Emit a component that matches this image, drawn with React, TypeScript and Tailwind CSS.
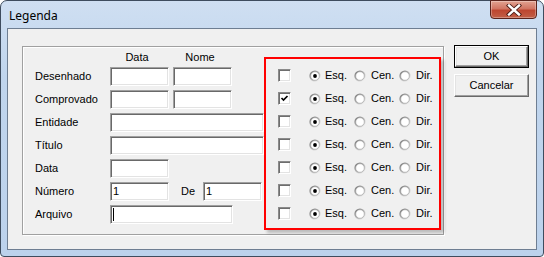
import React from "react";

const rows = [false, true, false, false, false, false, false];

function Sunken({ className = "", children }: { className?: string; children?: React.ReactNode }) {
  return (
    <div
      className={`h-[19px] bg-white border border-t-[#a0a0a0] border-l-[#a0a0a0] border-r-white border-b-white shadow-[inset_1px_1px_0_#696969,inset_-1px_-1px_0_#e3e3e3] flex items-center pl-[2px] ${className}`}
    >
      {children}
    </div>
  );
}

function Radio({ on }: { on?: boolean }) {
  return (
    <svg width="12" height="12" viewBox="0 0 12 12" className="shrink-0">
      <defs>
        <linearGradient id="rg" x1="0" y1="0" x2="1" y2="1">
          <stop offset="0" stopColor="#6a6a6a" />
          <stop offset="0.5" stopColor="#b4b4b4" />
          <stop offset="1" stopColor="#ffffff" />
        </linearGradient>
      </defs>
      <circle cx="6" cy="6" r="5.6" fill="url(#rg)" />
      <circle cx="6" cy="6" r="4.3" fill="#ffffff" stroke="#9a9a9a" strokeWidth="0.6" />
      {on && <circle cx="6" cy="6" r="1.9" fill="#000" />}
    </svg>
  );
}

function Check({ on }: { on?: boolean }) {
  return (
    <div className="w-[13px] h-[13px] bg-white border border-t-[#8a8a8a] border-l-[#8a8a8a] border-r-white border-b-white shadow-[inset_1px_1px_0_#6e6e6e,inset_-1px_-1px_0_#e3e3e3] shrink-0">
      {on && (
        <svg width="11" height="11" viewBox="0 0 11 11">
          <path d="M2.5 5 L4.5 7 L8.5 3" fill="none" stroke="#000" strokeWidth="1.7" />
        </svg>
      )}
    </div>
  );
}

function Label({ children }: { children: React.ReactNode }) {
  return <div className="w-[75px] shrink-0">{children}</div>;
}

export default function App() {
  return (
    <div className="w-[544px] h-[257px] font-['Liberation_Sans',Arial,sans-serif] text-[11px] text-black bg-white">
      <div className="h-full flex flex-col rounded-t-[7px] rounded-b-[4px] border border-[#3e4c5e] bg-[linear-gradient(180deg,#cfdff2_0%,#c0d5ed_30%,#bcd2ec_100%)]">
        {/* title bar */}
        <div className="h-[27px] flex items-start justify-between shrink-0">
          <span className="pl-[8px] pt-[8px] font-['Noto_Sans',sans-serif] text-[12px] leading-[14px] text-black">
            Legenda
          </span>
          <button className="mr-[6px] -mt-px w-[47px] h-[19px] rounded-b-[4px] border border-[#5a231c] bg-[linear-gradient(180deg,#e2a392_0%,#d17563_45%,#bd4630_55%,#c25f47_100%)] shadow-[inset_0_0_0_1px_rgba(255,255,255,0.3)] flex items-center justify-center">
            <svg width="16" height="12" viewBox="0 0 16 12">
              <path d="M3 1.5 L13 10.5 M13 1.5 L3 10.5" stroke="#4a1a14" strokeWidth="4.2" strokeLinecap="square" />
              <path d="M3 1.5 L13 10.5 M13 1.5 L3 10.5" stroke="#ffffff" strokeWidth="2.4" strokeLinecap="square" />
            </svg>
          </button>
        </div>

        {/* client area */}
        <div className="flex-1 mx-[6px] mb-[6px] border border-[#6e7e92] bg-[#f0f0f0] flex items-start pl-[14px] pt-[16px]">
          {/* group box */}
          <div className="mt-px w-[422px] h-[189px] border border-[#a0a0a0] shadow-[1px_1px_0_#ffffff,inset_1px_1px_0_#ffffff] flex pl-[12px]">
            <div className="w-[229px] flex flex-col">
              <div className="h-[20px] flex items-center">
                <Label>{""}</Label>
                <div className="w-[59px] text-center pr-[5px]">Data</div>
                <div className="w-[59px] ml-[4px] text-center pr-[5px]">Nome</div>
              </div>
              <div className="flex flex-col gap-[4px]">
                <div className="flex items-center">
                  <Label>Desenhado</Label>
                  <Sunken className="w-[59px]" />
                  <Sunken className="w-[59px] ml-[4px]" />
                </div>
                <div className="flex items-center">
                  <Label>Comprovado</Label>
                  <Sunken className="w-[59px]" />
                  <Sunken className="w-[59px] ml-[4px]" />
                </div>
                <div className="flex items-center">
                  <Label>Entidade</Label>
                  <Sunken className="w-[154px]" />
                </div>
                <div className="flex items-center">
                  <Label>Título</Label>
                  <Sunken className="w-[154px]" />
                </div>
                <div className="flex items-center">
                  <Label>Data</Label>
                  <Sunken className="w-[59px]" />
                </div>
                <div className="flex items-center">
                  <Label>Número</Label>
                  <Sunken className="w-[59px]">1</Sunken>
                  <span className="ml-[12px] w-[22px]">De</span>
                  <Sunken className="w-[59px]">1</Sunken>
                </div>
                <div className="flex items-center">
                  <Label>Arquivo</Label>
                  <Sunken className="w-[123px]">
                    <div className="w-px h-[13px] bg-black" />
                  </Sunken>
                </div>
              </div>
            </div>

            {/* highlighted alignment panel */}
            <div className="mt-[10px] w-[177px] h-[173px] border-2 border-[#ff0000] bg-[#f0f0f0] shadow-[3px_3px_3px_rgba(0,0,0,0.22)] flex flex-col pt-[5px] pl-[12px]">
              {rows.map((checked, i) => (
                <div key={i} className="h-[23px] flex items-center">
                  <Check on={checked} />
                  <div className="ml-[18px] w-[45px] flex items-center gap-[4px]">
                    <Radio on />
                    <span>Esq.</span>
                  </div>
                  <div className="w-[45px] flex items-center gap-[5px]">
                    <Radio />
                    <span>Cen.</span>
                  </div>
                  <div className="flex items-center gap-[5px]">
                    <Radio />
                    <span>Dir.</span>
                  </div>
                </div>
              ))}
            </div>
          </div>

          {/* buttons */}
          <div className="ml-[10px] flex flex-col gap-[6px]">
            <div className="w-[75px] h-[23px] border border-black">
              <button className="w-full h-full border border-t-white border-l-white border-r-[#696969] border-b-[#696969] shadow-[inset_-1px_-1px_0_#a0a0a0,inset_1px_1px_0_#e3e3e3] bg-[#f0f0f0] flex items-center justify-center">
                OK
              </button>
            </div>
            <button className="w-[75px] h-[23px] border border-t-white border-l-white border-r-[#696969] border-b-[#696969] shadow-[inset_-1px_-1px_0_#a0a0a0,inset_1px_1px_0_#e3e3e3] bg-[#f0f0f0] flex items-center justify-center">
              Cancelar
            </button>
          </div>
        </div>
      </div>
    </div>
  );
}
